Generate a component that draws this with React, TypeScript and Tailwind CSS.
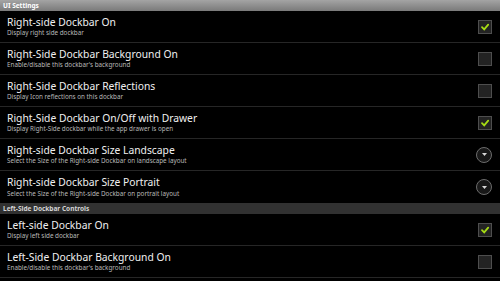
import React from "react";

type Pref = {
  title: string;
  summary: string;
  kind: "check" | "list";
  checked?: boolean;
};

const rightSide: Pref[] = [
  { title: "Right-side Dockbar On", summary: "Display right side dockbar", kind: "check", checked: true },
  { title: "Right-Side Dockbar Background On", summary: "Enable/disable this dockbar's background", kind: "check" },
  { title: "Right-Side Dockbar Reflections", summary: "Display Icon reflections on this dockbar", kind: "check" },
  {
    title: "Right-Side Dockbar On/Off with Drawer",
    summary: "Display Right-Side dockbar while the app drawer is open",
    kind: "check",
    checked: true,
  },
  {
    title: "Right-side Dockbar Size Landscape",
    summary: "Select the Size of the Right-side Dockbar on landscape layout",
    kind: "list",
  },
  {
    title: "Right-side Dockbar Size Portrait",
    summary: "Select the Size of the Right-side Dockbar on portrait layout",
    kind: "list",
  },
];

const leftSide: Pref[] = [
  { title: "Left-side Dockbar On", summary: "Display left side dockbar", kind: "check", checked: true },
  { title: "Left-Side Dockbar Background On", summary: "Enable/disable this dockbar's background", kind: "check" },
];

function CheckBox({ checked }: { checked?: boolean }) {
  return (
    <span className="w-[14px] h-[14px] border border-[#4e4e4e] bg-[#232323] grid place-items-center">
      {checked && (
        <svg viewBox="0 0 10 10" className="w-[10px] h-[10px]">
          <path d="M2 5.2 L4.2 7.4 L8.2 2.6" fill="none" stroke="#a6dc14" strokeWidth="1.8" strokeLinecap="round" />
        </svg>
      )}
    </span>
  );
}

function ListArrow() {
  return (
    <span className="w-4 h-4 rounded-full border border-[#6c6c6c] bg-[#181818] grid place-items-center">
      <svg viewBox="0 0 5 3" className="w-[5px] h-[3px]">
        <path d="M0 0 H5 L2.5 3 Z" fill="#d8d8d8" />
      </svg>
    </span>
  );
}

function Row({ pref, last }: { pref: Pref; last?: boolean }) {
  return (
    <div className={`h-[32px] flex items-center pl-[7px] pr-[8px] ${last ? "" : "border-b border-[#262626]"}`}>
      <div className="flex-1 leading-none">
        <div className="text-[10.3px] text-[#f0f0f0]">{pref.title}</div>
        <div className="mt-[3px] text-[6.3px] text-[#b8b8b8]">{pref.summary}</div>
      </div>
      {pref.kind === "check" ? <CheckBox checked={pref.checked} /> : <ListArrow />}
    </div>
  );
}

export default function App() {
  return (
    <div className="w-[500px] h-[281px] overflow-hidden bg-black font-['Noto_Sans',sans-serif]">
      <div className="h-[11px] bg-gradient-to-b from-[#a4a4a4] to-[#7a7a7a] pl-[3px] text-[6.5px] font-bold text-white leading-[11px]">
        UI Settings
      </div>
      {rightSide.map((p, i) => (
        <Row key={p.title} pref={p} last={i === rightSide.length - 1} />
      ))}
      <div className="h-[11px] bg-[#313131] pl-[3px] text-[6.5px] font-bold text-[#d4d4d4] leading-[11px]">
        Left-Side Dockbar Controls
      </div>
      {leftSide.map((p) => (
        <Row key={p.title} pref={p} />
      ))}
    </div>
  );
}
